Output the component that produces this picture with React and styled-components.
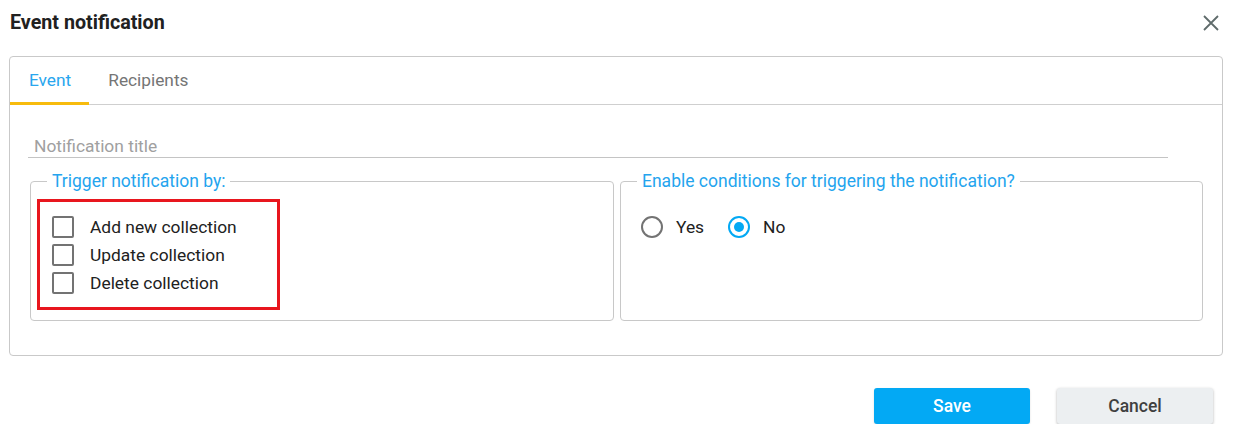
import React, { useState } from "react";
import styled, { createGlobalStyle } from "styled-components";

const GlobalStyle = createGlobalStyle`
    body {
        margin: 0;
        background: #fff;
        font-family: Roboto, "Liberation Sans", Arial, sans-serif;
        color: #212121;
    }
    * { box-sizing: border-box; }
`;

const Dialog = styled.div`
    width: 1236px;
    padding: 0 13px 0 9px;
`;

const Header = styled.div`
    height: 44px;
    display: flex;
    align-items: center;
    justify-content: space-between;
    padding: 1px 0 0 1px;
`;

const Title = styled.h1`
    margin: 0;
    font-size: 19.7px;
    font-weight: 700;
    color: #212121;
`;

const CloseButton = styled.button`
    border: 0;
    background: none;
    padding: 0;
    width: 18px;
    height: 18px;
    margin-right: 3px;
    display: flex;
    align-items: center;
    justify-content: center;
    cursor: pointer;
`;

const Panel = styled.div`
    margin-top: 12px;
    height: 300px;
    border: 1px solid #c9c9c9;
    border-radius: 4px;
`;

const TabBar = styled.div`
    display: flex;
    height: 48px;
    border-bottom: 1px solid #cfcfcf;
`;

const Tab = styled.div`
    padding: 1px 18px 0 19px;
    display: flex;
    align-items: center;
    font-size: 17.3px;
    color: ${p => (p.$active ? "#29a6ee" : "#757575")};
    border-bottom: 3px solid ${p => (p.$active ? "#f7bb0d" : "transparent")};
    margin-bottom: -1px;
    cursor: pointer;
`;

const Body = styled.div`
    padding: 0 20px;
`;

const TitleInput = styled.input`
    display: block;
    width: 1140px;
    height: 32px;
    margin: 21px 0 0 -2px;
    border: 0;
    border-bottom: 1px solid #c4c4c4;
    padding: 8px 6px 0;
    font-family: inherit;
    font-size: 17.4px;
    outline: none;
    &::placeholder {
        color: #a0a0a0;
    }
`;

const Columns = styled.div`
    display: grid;
    grid-template-columns: 584px 583px;
    gap: 6px;
    margin-top: 14px;
`;

const Group = styled.fieldset`
    margin: 0;
    height: 149px;
    padding: 0 6px;
    border: 1px solid #c8c8c8;
    border-radius: 4px;
`;

const Legend = styled.legend`
    margin-left: 10px;
    padding: 0 5px;
    font-size: 17.5px;
    line-height: 19px;
    color: #24a4ee;
`;

const Highlight = styled.div`
    width: 243px;
    margin-top: 8px;
    border: 3px solid #e8161e;
    padding: 11px 12px 10px;
`;

const CheckRow = styled.label`
    display: flex;
    align-items: center;
    height: 28px;
    gap: 16px;
    font-size: 17.4px;
    color: #212121;
    cursor: pointer;
`;

const Box = styled.span`
    width: 22px;
    height: 22px;
    border: 2px solid #737373;
    border-radius: 2px;
    background: ${p => (p.$checked ? "#03a9f4" : "#fff")};
    flex-shrink: 0;
`;

const RadioRow = styled.div`
    display: flex;
    align-items: center;
    height: 28px;
    margin: 22px 0 0 14px;
`;

const RadioLabel = styled.label`
    display: flex;
    align-items: center;
    gap: 13px;
    margin-right: 24px;
    font-size: 17.4px;
    color: #212121;
    cursor: pointer;
`;

const Circle = styled.span`
    width: 22px;
    height: 22px;
    border-radius: 50%;
    border: 2px solid ${p => (p.$checked ? "#03a9f4" : "#737373")};
    display: flex;
    align-items: center;
    justify-content: center;
    &::after {
        content: "";
        width: 10px;
        height: 10px;
        border-radius: 50%;
        background: ${p => (p.$checked ? "#03a9f4" : "transparent")};
    }
`;

const Footer = styled.div`
    display: flex;
    justify-content: flex-end;
    gap: 27px;
    margin-top: 32px;
    padding-right: 10px;
`;

const Button = styled.button`
    width: 156px;
    height: 36px;
    border: 0;
    border-radius: 3px;
    font-family: inherit;
    font-size: 17.5px;
    font-weight: 500;
    cursor: pointer;
    background: ${p => (p.$primary ? "#03a9f4" : "#eceff1")};
    color: ${p => (p.$primary ? "#fff" : "#3f3f3f")};
    box-shadow: ${p =>
        p.$primary ? "0 1px 2px rgba(0,0,0,0.15)" : "0 1px 3px rgba(0,0,0,0.3)"};
`;

const triggers = ["Add new collection", "Update collection", "Delete collection"];

export default function App() {
    const [checked, setChecked] = useState({});
    const [cond, setCond] = useState("no");

    return (
        <>
            <GlobalStyle />
            <Dialog>
                <Header>
                    <Title>Event notification</Title>
                    <CloseButton aria-label="Close">
                        <svg width="16" height="16" viewBox="0 0 16 16">
                            <path d="M1 1 L15 15 M15 1 L1 15" stroke="#5f6b6b" strokeWidth="1.8" fill="none" />
                        </svg>
                    </CloseButton>
                </Header>
                <Panel>
                    <TabBar>
                        <Tab $active>Event</Tab>
                        <Tab>Recipients</Tab>
                    </TabBar>
                    <Body>
                        <TitleInput placeholder="Notification title" />
                        <Columns>
                            <Group>
                                <Legend>Trigger notification by:</Legend>
                                <Highlight>
                                    {triggers.map(t => (
                                        <CheckRow
                                            key={t}
                                            onClick={() => setChecked({ ...checked, [t]: !checked[t] })}
                                        >
                                            <Box $checked={checked[t]} />
                                            {t}
                                        </CheckRow>
                                    ))}
                                </Highlight>
                            </Group>
                            <Group>
                                <Legend>Enable conditions for triggering the notification?</Legend>
                                <RadioRow>
                                    <RadioLabel onClick={() => setCond("yes")}>
                                        <Circle $checked={cond === "yes"} />
                                        Yes
                                    </RadioLabel>
                                    <RadioLabel onClick={() => setCond("no")}>
                                        <Circle $checked={cond === "no"} />
                                        No
                                    </RadioLabel>
                                </RadioRow>
                            </Group>
                        </Columns>
                    </Body>
                </Panel>
                <Footer>
                    <Button $primary>Save</Button>
                    <Button>Cancel</Button>
                </Footer>
            </Dialog>
        </>
    );
}
